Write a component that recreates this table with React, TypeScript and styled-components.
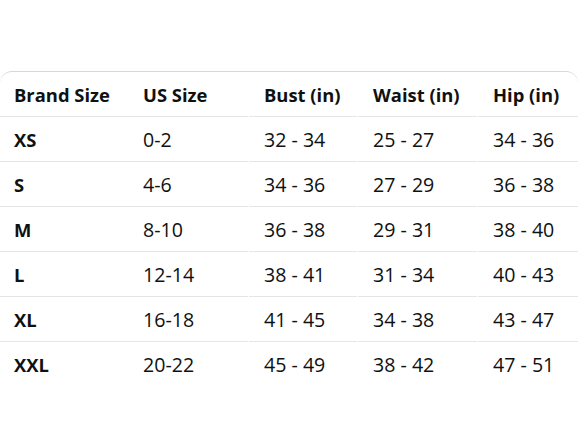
import styled, { createGlobalStyle } from 'styled-components';

const GlobalStyle = createGlobalStyle`
  html, body {
    margin: 0;
    padding: 0;
    background: #ffffff;
  }
  body {
    font-family: "Open Sans", "Noto Sans", Arial, sans-serif;
    color: #0f1111;
  }
`;

const Page = styled.div`
  width: 588px;
  height: 441px;
  padding-top: 71px;
  box-sizing: border-box;
`;

const Card = styled.div`
  width: 578px;
  border-top: 1px solid #d5d9d9;
  border-radius: 12px 12px 0 0;
  overflow: hidden;
`;

const Row = styled.div`
  display: grid;
  grid-template-columns: 129px 119px 109px 120px 101px;
  height: 45px;
`;

const Cell = styled.div<{ $split?: boolean; $head?: boolean; $last?: boolean }>`
  display: flex;
  align-items: center;
  box-sizing: border-box;
  padding-left: ${({ $split }) => ($split ? '15px' : '14px')};
  margin-left: ${({ $split }) => ($split ? '1px' : '0')};
  border-bottom: ${({ $last }) => ($last ? 'none' : '1px solid #e3e6e6')};
  font-size: ${({ $head }) => ($head ? '18.4px' : '19.6px')};
  font-weight: ${({ $head }) => ($head ? 700 : 400)};
  white-space: nowrap;
`;

const Label = styled.span<{ $bold?: boolean }>`
  font-weight: ${({ $bold }) => ($bold ? 700 : 'inherit')};
  font-size: ${({ $bold }) => ($bold ? '18.4px' : 'inherit')};
`;

const headers = ['Brand Size', 'US Size', 'Bust (in)', 'Waist (in)', 'Hip (in)'];

const sizes = [
  ['XS', '0-2', '32 - 34', '25 - 27', '34 - 36'],
  ['S', '4-6', '34 - 36', '27 - 29', '36 - 38'],
  ['M', '8-10', '36 - 38', '29 - 31', '38 - 40'],
  ['L', '12-14', '38 - 41', '31 - 34', '40 - 43'],
  ['XL', '16-18', '41 - 45', '34 - 38', '43 - 47'],
  ['XXL', '20-22', '45 - 49', '38 - 42', '47 - 51'],
];

function App() {
  return (
    <Page>
      <GlobalStyle />
      <Card>
        <Row>
          {headers.map((h, i) => (
            <Cell key={h} $head $split={i >= 2}>
              {h}
            </Cell>
          ))}
        </Row>
        {sizes.map((row, r) => (
          <Row key={row[0]}>
            {row.map((value, i) => (
              <Cell key={i} $split={i >= 2} $last={r === sizes.length - 1}>
                <Label $bold={i === 0}>{value}</Label>
              </Cell>
            ))}
          </Row>
        ))}
      </Card>
    </Page>
  );
}

export default App;
